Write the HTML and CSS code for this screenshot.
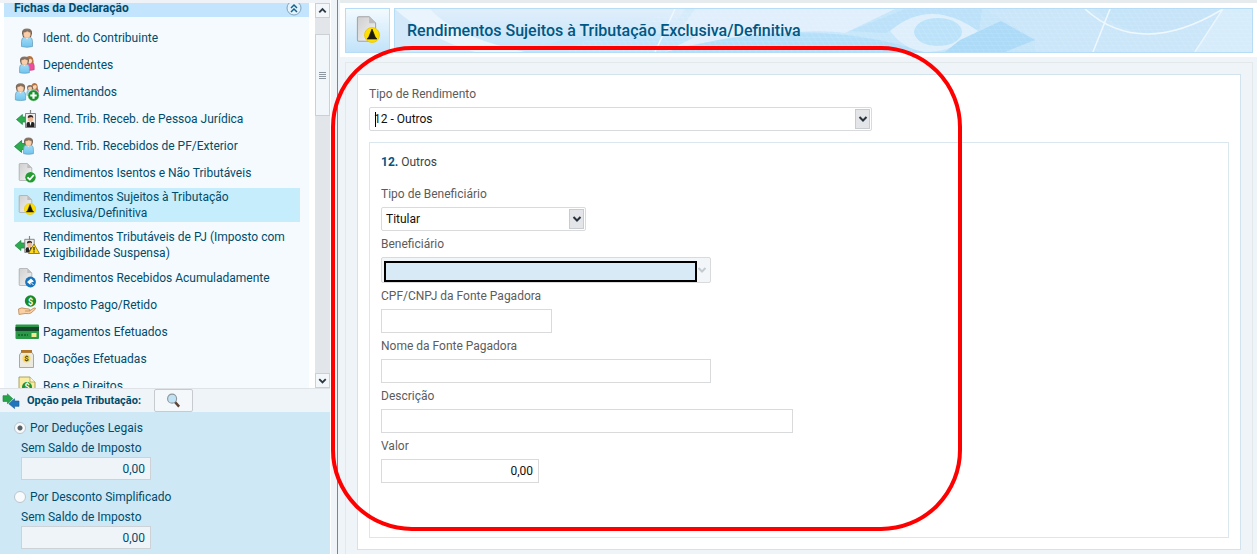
FILE: index.html
```html
<!DOCTYPE html>
<html lang="pt-BR">
<head>
<meta charset="utf-8">
<title>Rendimentos Sujeitos à Tributação Exclusiva/Definitiva</title>
<link rel="stylesheet" href="styles.css">
</head>
<body>
<svg class="defs" aria-hidden="true">
  <defs>
    <linearGradient id="g-body" x1="0" y1="0" x2="0" y2="1"><stop offset="0" stop-color="#a5dcf6"/><stop offset="1" stop-color="#6cc4f0"/></linearGradient>
    <linearGradient id="g-hair" x1="0" y1="0" x2="0" y2="1"><stop offset="0" stop-color="#8b7a6c"/><stop offset="1" stop-color="#5f4f46"/></linearGradient>
    <linearGradient id="g-page" x1="0" y1="0" x2="1" y2="1"><stop offset="0" stop-color="#cfcfcf"/><stop offset="1" stop-color="#f3f3f3"/></linearGradient>
    <linearGradient id="g-base" x1="0" y1="0" x2="0" y2="1"><stop offset="0" stop-color="#e0eefa"/><stop offset="1" stop-color="#c2e4fa"/></linearGradient>
    <linearGradient id="g-blue" x1="0" y1="0" x2="1" y2="0"><stop offset="0" stop-color="#d8ecfa"/><stop offset="0.35" stop-color="#c6e6fa"/><stop offset="1" stop-color="#c6e3f7"/></linearGradient>
    <pattern id="mesh" width="6" height="4" patternUnits="userSpaceOnUse" patternTransform="skewX(30)"><path d="M0 0H6M0 0V4" fill="none" stroke="#fff" stroke-width=".6" opacity=".5"/></pattern>
    <symbol id="person" viewBox="0 0 14 20">
      <path d="M1.500 18.500V13.500Q1.500 9.500 4.500 9H9.500Q12.500 9.500 12.500 13.500V18.500Q7 20 1.500 18.500Z" fill="url(#g-body)" stroke="#6c9fb9" stroke-width=".8"/>
      <path d="M5 9L7 11.500L9 9Z" fill="#fff"/>
      <path d="M2 5.500Q1.500 .5 7 .5Q12.500 .5 12 5.500L11 9H3Z" fill="url(#g-hair)"/>
      <path d="M3.600 4.500Q6 4.300 7.500 3.200Q8.500 4.300 10.500 4.500Q11.300 10 7 10Q2.700 10 3.600 4.500Z" fill="#f8cfaa" stroke="#c08c62" stroke-width=".4"/>
    </symbol>
    <symbol id="woman" viewBox="0 0 14 20">
      <path d="M1.500 18V12Q2 9 5 9H10Q13 9.500 13 13V18Q7 19.500 1.500 18Z" fill="#ee4f9b" stroke="#c52a77" stroke-width=".7"/>
      <path d="M2 11Q1 .5 7 .5Q13 .5 12 11L10 10H4Z" fill="#b5703c"/>
      <path d="M4 5Q7 5 8 3.500Q9 5 10.500 5Q10.500 10 7 10Q4 10 4 5Z" fill="#fbd6b5"/>
    </symbol>
    <symbol id="arrow" viewBox="0 0 12 12"><path d="M.5 6L7 .5V3.200H11.500V8.800H7V11.500Z" fill="#2dab4f" stroke="#16803a" stroke-width=".7"/></symbol>
    <symbol id="page" viewBox="0 0 16 20"><path d="M1 1.500Q1 .5 2 .5H10L15 5.500V18.500Q15 19.500 14 19.500H2Q1 19.500 1 18.500Z" fill="url(#g-page)" stroke="#a3a3a3" stroke-width=".8"/><path d="M10 .5V5.500H15Z" fill="#bdbdbd"/></symbol>
    <symbol id="lock" viewBox="0 0 12 12"><circle cx="6" cy="6" r="5.600" fill="#ffe000" stroke="#e8c400" stroke-width=".6"/><path d="M6 1.500L8.400 7.500L9.700 9H2.300L3.600 7.500Z" fill="#1a1a10" stroke="#1a1a10" stroke-width=".5"/></symbol>
    <symbol id="badge" viewBox="0 0 12 18"><path d="M6 0V5" stroke="#888" stroke-width="1.200"/><path d="M1 3.500H11V17.500H1Z" fill="#eee" stroke="#777" stroke-width=".9"/><path d="M2 17V14Q2 12 4 12H8Q10 12 10 14V17Z" fill="#222"/><path d="M5 12L6 16L7 12Z" fill="#fff"/><ellipse cx="6" cy="9" rx="2.500" ry="3" fill="#f0b993"/><path d="M3.300 8Q3 5 6 5Q9 5 8.700 8L7 7Z" fill="#3c2a22"/></symbol>
    <symbol id="i-person" viewBox="0 0 26 20"><use href="#person" x="6" y="0" width="14" height="20"/></symbol>
    <symbol id="i-dep" viewBox="0 0 26 20"><use href="#woman" x="10" y="0" width="11" height="17"/><use href="#person" x="4" y="1" width="13" height="18"/></symbol>
    <symbol id="i-ali" viewBox="0 0 26 20"><use href="#woman" x="16" y="0" width="9" height="14"/><use href="#person" x="12" y="2" width="8" height="13"/><use href="#person" x="0" y="0" width="13" height="20"/><circle cx="19.500" cy="13.500" r="5.700" fill="#16932b" stroke="#fff" stroke-width=".6"/><path d="M19.500 10.300V16.700M16.300 13.500H22.700" stroke="#fff" stroke-width="2.200"/></symbol>
    <symbol id="i-pj" viewBox="0 0 26 20"><use href="#arrow" x="2" y="5" width="11" height="11"/><use href="#badge" x="10" y="1" width="13" height="18"/></symbol>
    <symbol id="i-pf" viewBox="0 0 26 20"><use href="#arrow" x="0" y="4" width="13" height="13"/><use href="#person" x="8" y="1" width="13" height="18"/></symbol>
    <symbol id="i-ok" viewBox="0 0 26 20"><use href="#page" x="4" y="0" width="15" height="18"/><circle cx="16.500" cy="14.300" r="5.200" fill="#239b31"/><path d="M13.500 14.300L15.800 16.500L19.800 12" fill="none" stroke="#fff" stroke-width="1.800"/></symbol>
    <symbol id="i-excl" viewBox="0 0 26 20"><use href="#page" x="4" y="0" width="15" height="18"/><use href="#lock" x="10" y="8" width="12" height="12"/></symbol>
    <symbol id="i-susp" viewBox="0 0 26 20"><use href="#arrow" x="0" y="5" width="12" height="11"/><use href="#badge" x="9" y="1" width="13" height="17"/><path d="M20 9L25.500 18.500H14.500Z" fill="#ffd91a" stroke="#7b6a10" stroke-width=".8"/><path d="M20 12V15.500M20 16.300V17.500" stroke="#222" stroke-width="1.200"/></symbol>
    <symbol id="i-acum" viewBox="0 0 26 20"><use href="#page" x="4" y="0" width="15" height="18"/><circle cx="16.500" cy="14" r="5.400" fill="#1874bd"/><path d="M13 14L17 10.500L20 13.500L16.500 15V17Z" fill="#fff"/><path d="M17.500 15L19.500 17" stroke="#fff" stroke-width="1"/></symbol>
    <symbol id="i-pago" viewBox="0 0 26 20"><circle cx="16.500" cy="6" r="5.700" fill="#188b28"/><text x="16.500" y="9.500" class="coin">$</text><path d="M4.500 14Q8 12 11 13.500L15 14Q17 14.500 15.500 16L19 13.500Q22 12 21.500 14L17 18Q15 19 11 18.500L5 19.500Z" fill="#f8d0a4" stroke="#bf8550" stroke-width=".8"/><path d="M11 16H15.500" stroke="#bf8550" stroke-width=".8"/></symbol>
    <symbol id="i-card" viewBox="0 0 26 20"><rect x="1.500" y="2.500" width="23.500" height="14.500" rx="1" fill="#299847"/><rect x="1.500" y="5" width="23.500" height="4" fill="#14472a"/><path d="M4 13H14" stroke="#126026" stroke-width="1.500" stroke-dasharray="2 1"/><rect x="17.500" y="11" width="5" height="4" fill="#f2e991"/></symbol>
    <symbol id="i-doa" viewBox="0 0 26 20"><path d="M7 3.500H18L19.500 6V18.500H5.500V6Z" fill="#ece9df" stroke="#9a9587" stroke-width=".8"/><rect x="7" y="1" width="11" height="2.800" fill="#b47828"/><circle cx="12.500" cy="9.500" r="4" fill="#ffdb57"/><text x="12.500" y="12.200" class="coin coin-dark">$</text></symbol>
    <symbol id="i-bens" viewBox="0 0 26 20"><path d="M5 1H16L21 6V19H5Z" fill="#f8eda0" stroke="#a49a53" stroke-width=".9"/><path d="M16 1V6H21" fill="#fff8cf" stroke="#a49a53" stroke-width=".7"/><circle cx="13" cy="11" r="5" fill="#20922c"/><text x="13" y="14" class="coin">$</text></symbol>
  </defs>
</svg>

<aside class="sidebar">
  <div class="tree">
    <section class="panel">
      <h2 class="panel-head">Fichas da Declaração
        <button class="collapse" aria-label="Recolher"><svg viewBox="0 0 16 16"><circle cx="8" cy="8" r="7" fill="#e3f3fe" stroke="#7ea3bc"/><path d="M5 8L8 5L11 8M5 12L8 9L11 12" fill="none" stroke="#17618c" stroke-width="1.500"/></svg></button>
      </h2>
      <nav class="items">
        <a class="item" href="#"><svg><use href="#i-person"/></svg>Ident. do Contribuinte</a>
        <a class="item" href="#"><svg><use href="#i-dep"/></svg>Dependentes</a>
        <a class="item" href="#"><svg><use href="#i-ali"/></svg>Alimentandos</a>
        <a class="item" href="#"><svg><use href="#i-pj"/></svg>Rend. Trib. Receb. de Pessoa Jurídica</a>
        <a class="item" href="#"><svg><use href="#i-pf"/></svg>Rend. Trib. Recebidos de PF/Exterior</a>
        <a class="item" href="#"><svg><use href="#i-ok"/></svg>Rendimentos Isentos e Não Tributáveis</a>
        <a class="item tall current" href="#"><svg><use href="#i-excl"/></svg><span>Rendimentos Sujeitos à Tributação<br>Exclusiva/Definitiva</span></a>
        <a class="item tall" href="#"><svg><use href="#i-susp"/></svg><span>Rendimentos Tributáveis de PJ (Imposto com<br>Exigibilidade Suspensa)</span></a>
        <a class="item" href="#"><svg><use href="#i-acum"/></svg>Rendimentos Recebidos Acumuladamente</a>
        <a class="item" href="#"><svg><use href="#i-pago"/></svg>Imposto Pago/Retido</a>
        <a class="item" href="#"><svg><use href="#i-card"/></svg>Pagamentos Efetuados</a>
        <a class="item" href="#"><svg><use href="#i-doa"/></svg>Doações Efetuadas</a>
        <a class="item" href="#"><svg><use href="#i-bens"/></svg>Bens e Direitos</a>
      </nav>
    </section>
    <div class="scrollbar">
      <button class="scroll-btn" aria-label="Rolar para cima"><svg viewBox="0 0 14 14"><path d="M3.500 9L7 5.500L10.500 9" fill="none" stroke="#2c3a46" stroke-width="2"/></svg></button>
      <div class="thumb"><i></i><i></i><i></i><i></i></div>
      <button class="scroll-btn down" aria-label="Rolar para baixo"><svg viewBox="0 0 14 14"><path d="M3.500 5.500L7 9L10.500 5.500" fill="none" stroke="#2c3a46" stroke-width="2"/></svg></button>
    </div>
  </div>
  <div class="option-head">
    <svg class="swap" viewBox="0 0 20 18"><path d="M1 3H6V1L12 6.500L6 12V9.500H1Z" fill="#27a34a" stroke="#188237" stroke-width=".7"/><path d="M19 9H14V6.500L7.500 12L14 17.500V15H19Z" fill="#1f76bb" stroke="#155f9c" stroke-width=".7"/></svg>
    <b>Opção pela Tributação:</b>
    <button class="search" aria-label="Comparar opções"><svg viewBox="0 0 16 16"><path d="M9 9L14 14.500" stroke="#5b4335" stroke-width="2.600"/><circle cx="6.500" cy="6" r="4.800" fill="#bfe2f5" stroke="#8b979f" stroke-width="1.200"/></svg></button>
  </div>
  <div class="options">
    <label class="radio"><input type="radio" name="opcao" checked>Por Deduções Legais</label>
    <label class="result">Sem Saldo de Imposto<input type="text" value="0,00" readonly></label>
    <label class="radio"><input type="radio" name="opcao">Por Desconto Simplificado</label>
    <label class="result">Sem Saldo de Imposto<input type="text" value="0,00" readonly></label>
  </div>
</aside>
<div class="divider"></div>
<main class="main">
  <header class="title-row">
    <div class="title-icon"><svg viewBox="0 0 27 31"><use href="#page" x="1" y="1" width="23" height="26"/><use href="#lock" x="10" y="12" width="16" height="16"/></svg></div>
    <div class="banner">
      <svg class="waves" viewBox="0 0 857 43" preserveAspectRatio="xMaxYMid slice" aria-hidden="true">
        <rect width="857" height="43" fill="url(#g-base)"/>
        <path d="M0 0H20Q50 25 110 43H0Z" fill="#d3e9fa"/>
        <path d="M0 0H35Q60 28 130 43H80Q30 28 0 0Z" fill="#eaf4fc"/>
        <path d="M290 0H857V43H260Z" fill="url(#g-blue)"/>
        <path d="M300 0H500L450 24Q400 16 270 43Z" fill="#e0effb"/>
        <path d="M130 43Q200 14 300 28L270 43Z" fill="#c2e5fb"/>
        <path d="M270 43Q410 4 530 43Z" fill="#b5dff9"/>
        <path d="M455 22L510 0H587L584 22L545 5L515 13L490 24Z" fill="#bce1f9"/>
        <path d="M495 22Q535 -12 583 22Q560 43 530 43Q508 40 495 22Z" fill="#deeffb"/>
        <ellipse cx="543" cy="23" rx="24" ry="14" fill="#bce2f9"/>
        <path d="M565 31L606 12L640 31L610 43H550Z" fill="#acdaf7"/>
        <path d="M590 0H700Q750 48 825 0H857V43H640V30L610 12Z" fill="#cbe6f8"/>
        <path d="M170 43Q240 0 340 0H857V43Z" fill="url(#mesh)" opacity=".55"/>
        <path d="M690 0Q745 50 828 0M715 0L698 43M828 0L800 43M280 0L260 43" fill="none" stroke="#eef8fe" stroke-width="1.500"/>
        <path d="M828 0H857V43H800Z" fill="#e0f0fb" opacity=".6"/>
      </svg>
      <h1>Rendimentos Sujeitos à Tributação Exclusiva/Definitiva</h1>
    </div>
  </header>
  <div class="frame">
    <form class="sheet">
      <div class="field">
        <label for="tipo">Tipo de Rendimento</label>
        <div class="combo combo-main">
          <select id="tipo"><option>12 - Outros</option></select><span class="caret"></span>
          <span class="arrow"><svg viewBox="0 0 10 8"><path d="M1.500 2L5 5.500L8.500 2" /></svg></span>
        </div>
      </div>
      <fieldset class="group">
        <p class="group-title"><b>12.</b> Outros</p>
        <div class="field">
          <label for="tben">Tipo de Beneficiário</label>
          <div class="combo combo-type">
            <select id="tben"><option>Titular</option></select>
            <span class="arrow"><svg viewBox="0 0 10 8"><path d="M1.500 2L5 5.500L8.500 2" /></svg></span>
          </div>
        </div>
        <div class="field">
          <label for="ben">Beneficiário</label>
          <div class="combo combo-off">
            <select id="ben" disabled></select>
            <span class="arrow"><svg viewBox="0 0 10 8"><path d="M1.500 2L5 5.500L8.500 2" /></svg></span>
            <span class="mask"></span>
          </div>
        </div>
        <div class="field"><label for="cpf">CPF/CNPJ da Fonte Pagadora</label><input id="cpf" class="w-cpf" type="text"></div>
        <div class="field"><label for="nome">Nome da Fonte Pagadora</label><input id="nome" class="w-nome" type="text"></div>
        <div class="field"><label for="desc">Descrição</label><input id="desc" class="w-desc" type="text"></div>
        <div class="field"><label for="valor">Valor</label><input id="valor" class="w-valor" type="text" value="0,00"></div>
      </fieldset>
    </form>
  </div>
</main>
<div class="highlight"></div>
</body>
</html>
```

FILE: styles.css
```css
* { box-sizing: border-box; }
body {
  margin: 0;
  height: 100vh;
  display: flex;
  overflow: hidden;
  position: relative;
  background: #eff4f9;
  font: 12px/16px Roboto, "Liberation Sans", sans-serif;
  color: #004c6c;
}
button, input, select { font: inherit; color: inherit; margin: 0; padding: 0; }
svg { display: block; }
.defs { position: absolute; width: 0; height: 0; }
.coin { font: bold 9px Roboto, sans-serif; fill: #fff; text-anchor: middle; }
.coin-dark { font-size: 8px; fill: #4a3a10; }

/* Sidebar */
.sidebar { flex: none; width: 330px; display: flex; flex-direction: column; border-top: 3px solid #eff2f6; }
.tree { flex: none; height: 385px; display: flex; background: #fff; overflow: hidden; padding-left: 4px; }
.panel { width: 305px; background: #f4fafd; }
.panel-head {
  display: flex; justify-content: space-between; align-items: flex-end;
  height: 14px; margin: 0; padding: 0 7px 1px 10px;
  background: #c3e4fd; font-size: 12px; font-weight: 700; line-height: 16px;
}
.collapse { width: 16px; height: 16px; border: 0; background: none; }
.items { display: flex; flex-direction: column; padding: 7px 9px 0 10px; }
.item { display: flex; flex: none; align-items: center; gap: 3px; height: 27px; color: inherit; text-decoration: none; white-space: nowrap; }
.item svg { width: 26px; height: 20px; flex: none; }
.tall { height: 34px; margin: 2px 0 4px; }
.tall + .tall { margin-bottom: 2px; }
.current { background: #c5edfc; }
.scrollbar { width: 15px; margin-left: 6px; display: flex; flex-direction: column; background: #e2e5e9; }
.scroll-btn { width: 15px; height: 15px; border: 1px solid #ccd0d5; background: #f3f7fa; }
.down { margin-top: auto; }
.thumb { height: 82px; margin-top: 16px; border: 1px solid #ccd0d5; background: #f1f6fa; display: flex; flex-direction: column; justify-content: center; align-items: center; gap: 1px; }
.thumb i { width: 7px; height: 1px; background: #8e979f; }

.option-head { height: 24px; flex: none; display: flex; align-items: center; padding-left: 2px; border-top: 1px solid #dfe3e8; }
.swap { width: 18px; height: 16px; }
.option-head b { width: 127px; margin-left: 7px; font-size: 11px; }
.search { width: 39px; height: 23px; display: grid; place-items: center; border: 1px solid #c7cbd0; border-radius: 2px; background: #f5f8fa; }
.search svg { width: 15px; height: 15px; }
.options { flex: 1; background: #cfe8f5; padding: 8px 14px 0; }
.radio { display: flex; align-items: center; height: 16px; gap: 4px; }
.radio input { appearance: none; width: 12px; height: 12px; border: 1px solid #bac6ce; border-radius: 50%; background: #f8fafb; }
.radio input:checked { background: radial-gradient(circle, #565f66 0 2px, #f8fafb 3px); }
.result { display: flex; flex-direction: column; gap: 1px; padding: 4px 0 9px 7px; }
.result input { width: 130px; height: 23px; padding: 0 5px; border: 1px solid #cdd2d6; background: #eff4f9; text-align: right; }
.divider { flex: none; width: 10px; border-left: 1px solid #fff; background: linear-gradient(to right, #eff4f9 6px, #808488 6px 7px, #eff4f9 7px); }

/* Content */
.main { flex: 1; min-width: 0; display: flex; flex-direction: column; border-top: 3px solid #e6ebee; }
.title-row { flex: none; display: flex; gap: 4px; padding: 5px 4px 4px 5px; background: #fff; }
.title-icon { width: 45px; height: 45px; flex: none; display: grid; place-items: center; border: 1px solid #b7ddf6; background: linear-gradient(#f3fafe, #c1e3f9); }
.title-icon svg { width: 27px; height: 31px; }
.banner { flex: 1; display: grid; border: 1px solid #b7ddf6; align-items: center; }
.waves { grid-area: 1 / 1; width: 100%; height: 43px; }
.banner h1 { grid-area: 1 / 1; z-index: 1; margin: 0; padding-left: 12px; font-size: 16px; line-height: 20px; font-weight: 500; color: #005783; }
.frame { flex: 1; margin: 5px 4px 0 5px; padding: 11px; border: 1px solid #e3e8eb; border-bottom: 0; }
.sheet { padding: 11px; border: 1px solid #d3e3ed; background: #fff; }
.field { display: flex; flex-direction: column; align-items: flex-start; gap: 5px; color: #5c5c5c; }
.field input, .combo { max-width: 100%; border: 1px solid #d8dadc; background: #fff; color: #111; }
.field input { height: 24px; padding: 0 5px; }
.combo { display: grid; grid-template-columns: 1fr auto; position: relative; height: 24px; border-radius: 2px; }
.combo select { appearance: none; width: 100%; border: 0; padding-left: 4px; background: none; }
.arrow { width: 15px; margin: 1px; display: grid; place-items: center; border: 1px solid #c8cbcf; background: #e3e5e9; pointer-events: none; }
.arrow svg { width: 10px; height: 8px; }
.arrow path { fill: none; stroke: #27323c; stroke-width: 2; }
.combo-main { width: 503px; }
.combo-type { width: 205px; }
.combo-off { width: 330px; height: 26px; background: #f3f6f8; }
.combo-off .arrow { border-color: transparent; background: none; }
.combo-off path { stroke: #c3cbd1; }
.caret { position: absolute; left: 5px; top: 4px; width: 1px; height: 15px; background: #000; }
.mask { position: absolute; left: 2px; top: 3px; right: 13px; bottom: 0; border: 2px solid #000; background: #d9eaf7; }
.group { display: flex; flex-direction: column; gap: 5px; min-width: 0; margin: 11px 0 0; padding: 11px 11px 54px; border: 1px solid #dbe7ef; }
.group-title { margin: 0 0 11px; color: #3f3f3f; }
.group-title b { color: #005783; }
.w-cpf { width: 171px; }
.w-nome { width: 330px; }
.w-desc { width: 412px; }
.w-valor { width: 158px; text-align: right; }

/* Annotation over the form */
.highlight { position: absolute; left: 331px; top: 46px; width: 631px; height: 485px; border: 4px solid #f00; border-radius: 81px; pointer-events: none; }
```
